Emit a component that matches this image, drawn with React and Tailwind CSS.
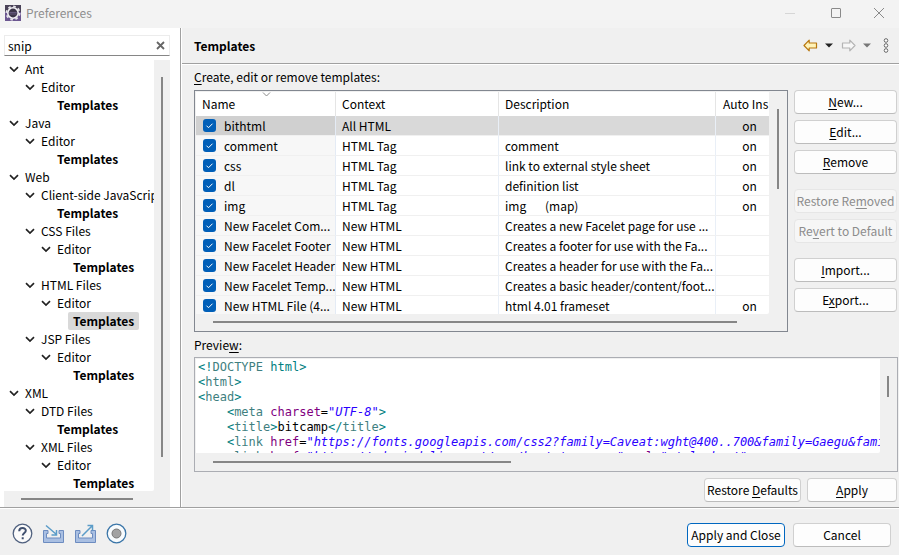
const UI = 'font-["Noto_Sans_CJK_KR","Noto_Sans",sans-serif]';

const TREE = [
  [0, "Ant"], [1, "Editor"], [2, "Templates", 1],
  [0, "Java"], [1, "Editor"], [2, "Templates", 1],
  [0, "Web"], [1, "Client-side JavaScript"], [2, "Templates", 1],
  [1, "CSS Files"], [2, "Editor"], [3, "Templates", 1],
  [1, "HTML Files"], [2, "Editor"], [3, "Templates", 2],
  [1, "JSP Files"], [2, "Editor"], [3, "Templates", 1],
  [0, "XML"], [1, "DTD Files"], [2, "Templates", 1],
  [1, "XML Files"], [2, "Editor"], [3, "Templates", 1],
];

const INDENT = ["pl-[4px]", "pl-[20px]", "pl-[36px]", "pl-[52px]"];

const ROWS = [
  ["bithtml", "All HTML", "", "on"],
  ["comment", "HTML Tag", "comment", "on"],
  ["css", "HTML Tag", "link to external style sheet", "on"],
  ["dl", "HTML Tag", "definition list", "on"],
  ["img", "HTML Tag", "img       (map)", "on"],
  ["New Facelet Com...", "New HTML", "Creates a new Facelet page for use ...", ""],
  ["New Facelet Footer", "New HTML", "Creates a footer for use with the Fa...", ""],
  ["New Facelet Header", "New HTML", "Creates a header for use with the Fa...", ""],
  ["New Facelet Temp...", "New HTML", "Creates a basic header/content/foot...", ""],
  ["New HTML File (4...", "New HTML", "html 4.01 frameset", "on"],
];

function Chevron() {
  return (
    <svg width="10" height="7" viewBox="0 0 10 7" fill="none" stroke="#222" strokeWidth="1.7">
      <path d="M1 1.2 5 5 9 1.2" />
    </svg>
  );
}

function EclipseIcon() {
  return (
    <svg width="16" height="16" viewBox="0 0 16 16" className="shrink-0">
      <rect width="16" height="16" fill="#6b5690" />
      <rect x="0" y="0" width="16" height="7" fill="#4a4358" />
      <circle cx="8" cy="8" r="6.6" fill="none" stroke="#e6e4ea" strokeWidth="1.8" strokeDasharray="2.6 2.58" />
      <circle cx="8" cy="8" r="5.2" fill="#3a3347" stroke="#f1f0f4" strokeWidth="1.6" />
      <path d="M4.2 7.4h7.6M4.3 9h7.4" stroke="#8777a8" strokeWidth="0.6" />
    </svg>
  );
}

function Btn({ children, className = "", disabled = false }) {
  return (
    <button
      type="button"
      disabled={disabled}
      className={`h-6 rounded-[4px] border border-[#d0d0d0] border-b-[#bcbcbc] bg-[#fdfdfd] whitespace-nowrap text-center leading-[20px] disabled:border-[#e6e6e6] disabled:bg-[#f6f6f6] disabled:text-[#8c8c8c] ${className}`}
    >
      {children}
    </button>
  );
}

function Key({ children }) {
  return <span className="underline underline-offset-2">{children}</span>;
}

function Arrow({ flip, stroke, fill }) {
  return (
    <svg width="15" height="13" viewBox="0 0 15 13" className={flip ? "-scale-x-100" : ""}>
      <path d="M1 6.5 6.2 1.2V4H13.5V9H6.2V11.8Z" fill={fill} stroke={stroke} strokeWidth="1.2" strokeLinejoin="round" />
    </svg>
  );
}

function Caret({ className }) {
  return (
    <svg width="8" height="5" viewBox="0 0 8 5" className={className}>
      <path d="M0 0.5h8L4 4.5z" fill="currentColor" />
    </svg>
  );
}

const T = ({ children }) => <span className="text-[#3f7f7f]">{children}</span>;
const P = ({ children }) => <span className="text-[#008080]">{children}</span>;
const A = ({ children }) => <span className="text-[#7f007f]">{children}</span>;
const S = ({ children }) => <span className="text-[#2a00ff] italic">{children}</span>;

function Code() {
  return (
    <pre className='pl-[2px] pt-px font-["DejaVu_Sans_Mono",monospace] text-[12px] leading-[15px] text-black'>
      <P>&lt;!</P><T>DOCTYPE</T> <P>html&gt;</P>{"\n"}
      <P>&lt;</P><T>html</T><P>&gt;</P>{"\n"}
      <P>&lt;</P><T>head</T><P>&gt;</P>{"\n"}
      {"    "}<P>&lt;</P><T>meta</T> <A>charset</A>=<S>"UTF-8"</S><P>&gt;</P>{"\n"}
      {"    "}<P>&lt;</P><T>title</T><P>&gt;</P>bitcamp<P>&lt;/</P><T>title</T><P>&gt;</P>{"\n"}
      {"    "}<P>&lt;</P><T>link</T> <A>href</A>=<S>"https://fonts.googleapis.com/css2?family=Caveat:wght@400..700&amp;family=Gaegu&amp;family=</S>{"\n"}
      {"    "}<P>&lt;</P><T>link</T> <A>href</A>=<S>"https://cdn.jsdelivr.net/npm/bootstrap.css"</S> <A>rel</A>=<S>"stylesheet"</S><P>&gt;</P>
    </pre>
  );
}

export default function App() {
  return (
    <div className={`flex min-h-screen flex-col overflow-hidden bg-[#f0f0f0] text-[12px] text-black ${UI}`}>
      <header className="flex h-7 items-center bg-[#f3f3f3] pb-[3px] pl-[5px] text-[#8f8f8f]">
        <EclipseIcon />
        <h1 className="ml-[5px] flex-1">Preferences</h1>
        <button type="button" aria-label="Minimize" className="flex w-[46px] justify-center">
          <svg width="12" height="12"><path d="M1 6.5h10" stroke="#d6d6d6" /></svg>
        </button>
        <button type="button" aria-label="Maximize" className="flex w-[46px] justify-center">
          <svg width="12" height="12"><rect x="1.5" y="1.5" width="9" height="9" rx="0.5" fill="none" stroke="#8a8a8a" /></svg>
        </button>
        <button type="button" aria-label="Close" className="flex w-10 justify-center">
          <svg width="12" height="12"><path d="m1 1 10 10M11 1 1 11" stroke="#8a8a8a" /></svg>
        </button>
      </header>

      <div className="flex flex-1 border-b border-[#a0a0a0]">
        <aside className="flex w-[181px] shrink-0 flex-col border-r border-[#a0a0a0] bg-white pl-1 pr-[10px] pt-[7px]">
          <div className="flex h-[21px] items-center border border-[#ececec] border-b-[#868686] bg-white pl-[3px] pr-1">
            <input aria-label="Filter" defaultValue="snip" className="min-w-0 flex-1 outline-none" />
            <button type="button" aria-label="Clear">
              <svg width="9" height="9" viewBox="0 0 9 9"><path d="m1 1 7 7M8 1 1 8" stroke="#666" strokeWidth="1.8" /></svg>
            </button>
          </div>
          <div className="mt-1 flex bg-[#f0f0f0]">
            <ul className="h-[431px] min-w-0 flex-1 overflow-hidden rounded-br-[2px] bg-white">
              {TREE.map(([depth, label, kind], i) => (
                <li key={i} className={`flex h-[18px] items-center whitespace-nowrap ${INDENT[depth]}`}>
                  <span className="flex w-3 shrink-0 justify-center">{!kind && <Chevron />}</span>
                  <button
                    type="button"
                    className={`h-[18px] shrink-0 rounded-[2px] px-[5px] leading-[18px] ${kind ? "font-bold" : ""} ${kind === 2 ? "bg-[#d9d9d9]" : ""}`}
                  >
                    {label}
                  </button>
                </li>
              ))}
            </ul>
            <div className="flex w-4 justify-center pt-[17px]">
              <div className="h-[380px] w-[2px] bg-[#868686]" />
            </div>
          </div>
          <div className="h-4 flex-1 bg-[#f0f0f0] pl-[17px] pt-[7px]">
            <div className="h-[2px] w-[112px] bg-[#868686]" />
          </div>
        </aside>

        <main className="flex min-w-0 flex-1 flex-col border-l border-white">
          <div className="flex h-9 items-center border-b border-[#a0a0a0] pl-3 pr-[10px]">
            <h2 className="flex-1 text-[12px] font-bold">Templates</h2>
            <button type="button" aria-label="Back"><Arrow stroke="#b8770f" fill="#fff3b8" /></button>
            <button type="button" aria-label="Back history" className="ml-[7px]"><Caret className="text-[#222]" /></button>
            <button type="button" aria-label="Forward" className="ml-[8px]"><Arrow flip stroke="#b4b4b4" fill="#f7f7f7" /></button>
            <button type="button" aria-label="Forward history" className="ml-[7px]"><Caret className="text-[#777]" /></button>
            <button type="button" aria-label="View menu" className="ml-[12px]">
              <svg width="6" height="15" viewBox="0 0 6 15" fill="#fff" stroke="#666" strokeWidth="1"><circle cx="3" cy="2.5" r="1.8" /><circle cx="3" cy="7.5" r="1.8" /><circle cx="3" cy="12.5" r="1.8" /></svg>
            </button>
          </div>

          <div className="flex flex-1 flex-col border-t border-white pl-3 pt-[3px]">
            <div className="h-[22px] leading-[18px]" id="list-label"><Key>C</Key>reate, edit or remove templates:</div>
            <div className="flex gap-[6px] pr-[2px]">
              <div className="min-w-0 flex-1 border border-[#828790] bg-[#f0f0f0] p-px">
                <div className="flex">
                  <div className="h-[222px] min-w-0 flex-1 overflow-hidden rounded-br-[2px] bg-white">
                    <table aria-labelledby="list-label" className="w-[calc(100%+14px)] table-fixed border-separate border-spacing-0 text-left">
                      <colgroup>
                        <col className="w-[140px]" /><col className="w-[163px]" /><col /><col className="w-[67px]" />
                      </colgroup>
                      <thead>
                        <tr className="h-6 leading-[20px]">
                          <th className="relative border-r border-[#e5e5e5] p-0 pl-[6px] font-normal">
                            Name
                            <svg width="9" height="5" viewBox="0 0 9 5" className="absolute left-[66px] top-0" fill="none" stroke="#8a8a8a"><path d="M1 0.5 4.5 4 8 0.5" /></svg>
                          </th>
                          <th className="border-r border-[#e5e5e5] p-0 pl-[6px] font-normal">Context</th>
                          <th className="border-r border-[#e5e5e5] p-0 pl-[6px] font-normal">Description</th>
                          <th className="whitespace-nowrap p-0 pl-[7px] font-normal">Auto Ins</th>
                        </tr>
                      </thead>
                      <tbody>
                        {ROWS.map(([name, ctx, desc, auto], i) => (
                          <tr key={name} className={`h-5 whitespace-pre leading-[19px] ${i === 0 ? "bg-[#d9d9d9]" : ""}`}>
                            <td className={`border-r border-b border-r-[#e4ebf5] border-b-[#f0f0f0] p-0 pl-[7px] ${i === 0 ? "bg-[#d0d0d0]" : "bg-[#f7f7f7]"}`}>
                              <label className="flex h-[19px] items-center">
                                <span className="grid h-[13px] w-[13px] shrink-0">
                                  <input type="checkbox" defaultChecked className="col-start-1 row-start-1 h-[13px] w-[13px] appearance-none rounded-[3px] bg-[#005fb8]" />
                                  <svg viewBox="0 0 13 13" className="pointer-events-none col-start-1 row-start-1 h-[13px] w-[13px]" fill="none" stroke="#fff"><path d="m3.5 6.7 2 2 4-4" /></svg>
                                </span>
                                <span className="ml-2">{name}</span>
                              </label>
                            </td>
                            <td className="border-r border-b border-r-[#e9eff7] border-b-[#f0f0f0] p-0 pl-[6px]">{ctx}</td>
                            <td className="border-r border-b border-r-[#e9eff7] border-b-[#f0f0f0] p-0 pl-[6px]">{desc}</td>
                            <td className="border-b border-[#f0f0f0] p-0 text-center">{auto}</td>
                          </tr>
                        ))}
                      </tbody>
                    </table>
                  </div>
                  <div className="flex w-[17px] justify-center pt-[17px]"><div className="h-20 w-[2px] bg-[#868686]" /></div>
                </div>
                <div className="h-4 pl-[17px] pr-[49px] pt-[7px]"><div className="h-[2px] bg-[#868686]" /></div>
              </div>
              <div className="flex w-[103px] flex-col gap-[6px]">
                <Btn><Key>N</Key>ew...</Btn>
                <Btn><Key>E</Key>dit...</Btn>
                <Btn><Key>R</Key>emove</Btn>
                <Btn disabled className="mt-[9px]">Restore Re<Key>m</Key>oved</Btn>
                <Btn disabled>Re<Key>v</Key>ert to Default</Btn>
                <Btn className="mt-[9px]"><Key>I</Key>mport...</Btn>
                <Btn>E<Key>x</Key>port...</Btn>
              </div>
            </div>

            <div className="mt-1 h-[21px] leading-[18px]">Previe<Key>w</Key>:</div>
            <div className="mr-px border border-[#abadb3] bg-[#f0f0f0] p-px">
              <div className="flex">
                <div className="h-[94px] min-w-0 flex-1 overflow-hidden rounded-br-[2px] bg-white"><Code /></div>
                <div className="flex w-4 justify-center pt-[17px]"><div className="h-[21px] w-[2px] bg-[#868686]" /></div>
              </div>
              <div className="h-[17px] pl-[17px] pt-[8px]"><div className="h-[2px] w-[298px] bg-[#868686]" /></div>
            </div>

            <div className="flex justify-end gap-[6px] pb-[5px] pr-[2px] pt-[6px]">
              <Btn className="w-[97px]">Restore <Key>D</Key>efaults</Btn>
              <Btn className="w-[90px]"><Key>A</Key>pply</Btn>
            </div>
          </div>
        </main>
      </div>

      <footer className="flex h-[47px] items-center border-t border-white pl-3 pr-2 pt-[5px]">
        <div className="flex flex-1 items-center gap-[9px] pb-[2px]">
          <button type="button" aria-label="Help">
            <svg width="21" height="21" viewBox="0 0 21 21"><circle cx="10.5" cy="10.5" r="9.3" fill="#fbfbfb" stroke="#50617f" strokeWidth="1.3" /><path d="M7.2 8.3c0-4.4 6.8-4.2 6.6-.5-.1 2.2-3.1 2.4-3.1 4.8M10.7 14.3v2" fill="none" stroke="#40506f" strokeWidth="2" /></svg>
          </button>
          <button type="button" aria-label="Import">
            <svg width="23" height="20" viewBox="0 0 23 20" fill="none"><path d="M6 6.5H1.5v12h20v-12H17v3h1.5V14h-14V9.5H6z" fill="#a9bfe2" stroke="#6d8cc0" /><path d="m4 1.5 10.5 9M14.5 6v5H9.5" stroke="#5b9cc8" strokeWidth="1.5" /></svg>
          </button>
          <button type="button" aria-label="Export">
            <svg width="23" height="20" viewBox="0 0 23 20" fill="none"><path d="M6 6.5H1.5v12h20v-12H17v3h1.5V14h-14V9.5H6z" fill="#a9bfe2" stroke="#6d8cc0" /><path d="m8 12 10.5-10.5M13.5 1.5h5v5" stroke="#5b9cc8" strokeWidth="1.5" /></svg>
          </button>
          <button type="button" aria-label="Record">
            <svg width="21" height="21" viewBox="0 0 21 21"><circle cx="10.5" cy="10.5" r="9.3" fill="#f8fbfd" stroke="#3a75a8" strokeWidth="1.3" /><circle cx="10.5" cy="10.5" r="4.5" fill="#a2a2a2" stroke="#777" /></svg>
          </button>
        </div>
        <div className="flex gap-2">
          <button type="button" className="h-6 w-[98px] rounded-[4px] border border-[#0067c0] bg-[#fdfdfd] leading-[20px] whitespace-nowrap">Apply and Close</button>
          <Btn className="w-[98px]">Cancel</Btn>
        </div>
      </footer>
    </div>
  );
}
